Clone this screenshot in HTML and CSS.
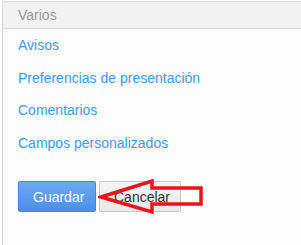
FILE: index.html
```html
<!DOCTYPE html>
<html lang="es">
<head>
    <meta charset="UTF-8">
    <title>Varios</title>
    <link rel="stylesheet" href="styles.css">
</head>
<body>
    <div class="panel">
        <div class="panel-header">Varios</div>
        <ul class="links">
            <li><a href="#">Avisos</a></li>
            <li><a href="#">Preferencias de presentación</a></li>
            <li><a href="#">Comentarios</a></li>
            <li><a href="#">Campos personalizados</a></li>
        </ul>
        <div class="actions">
            <button class="btn btn-primary">Guardar</button>
            <button class="btn btn-cancel">Cancelar</button>
            <!-- annotation arrow -->
            <svg class="arrow" width="106" height="36" viewBox="0 0 106 36">
                <path d="M3 18 L54 2 L54 9 L103 9 L103 25 L54 25 L54 33 Z" fill="none" stroke="#e8131b" stroke-width="3.5" stroke-linejoin="miter"/>
            </svg>
        </div>
    </div>
</body>
</html>
```

FILE: styles.css
```css
body {
    margin: 0;
    font-family: "Liberation Sans", Arial, sans-serif;
    background: #fff;
}

.panel {
    margin: 1px 0 0 2px;
    height: 244px;
    border-top: 1px solid #dcdcdc;
    border-left: 1px solid #d4d4d4;
    background: #fcfcfc;
    box-sizing: border-box;
}

.panel-header {
    height: 26px;
    line-height: 26px;
    padding-left: 15px;
    background: #f2f2f2;
    border-bottom: 1px solid #dcdcdc;
    color: #999;
    font-size: 14px;
}

.links {
    list-style: none;
    margin: 0;
    padding: 6px 0 0 15px;
}

.links li {
    height: 32.5px;
    line-height: 20px;
}

.links a {
    color: #3d9be9;
    text-decoration: none;
    font-size: 14px;
}

.actions {
    position: relative;
    display: flex;
    gap: 3px;
    padding: 16px 0 0 15px;
}

.btn {
    height: 31px;
    padding: 0 14px;
    font-family: "Liberation Sans", Arial, sans-serif;
    font-size: 14px;
    color: #333;
    background: linear-gradient(#f6f6f6, #e8e8e8);
    border: 1px solid #c8c8c8;
    border-radius: 2px;
}

.btn-primary {
    width: 78px;
    color: #fff;
    background: linear-gradient(#6aaaf3, #4b8fe8);
    border-color: #4a86d6;
}

.btn-cancel {
    width: 82px;
}

.arrow {
    position: absolute;
    left: 95px;
    top: 14px;
}
```
